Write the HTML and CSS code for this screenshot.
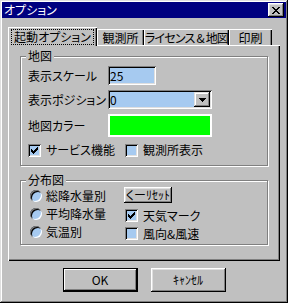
FILE: index.html
```html
<!DOCTYPE html>
<html lang="ja">
<head>
  <meta charset="UTF-8"/>
  <title>オプション</title>
  <link rel="stylesheet" href="styles.css">
</head>
<body>
  <div class="window">
    <div class="titlebar">
      <span class="title">オプション</span>
      <button class="close-btn">
        <svg width="8" height="7" viewBox="0 0 8 7" shape-rendering="crispEdges"><path d="M0 0h2v1H0zM6 0h2v1H6zM1 1h2v1H1zM5 1h2v1H5zM2 2h4v1H2zM3 3h2v1H3zM2 4h4v1H2zM1 5h2v1H1zM5 5h2v1H5zM0 6h2v1H0zM6 6h2v1H6z" fill="#000"/></svg>
      </button>
    </div>

    <div class="tabs">
      <div class="tab tab-start active"><span class="focus">起動オプション</span></div>
      <div class="tab tab-station">観測所</div>
      <div class="tab tab-license">ライセンス &amp; 地図</div>
      <div class="tab tab-print">印刷</div>
    </div>

    <div class="panel">
      <div class="group group-map">
        <span class="group-title">地図</span>
        <div class="field-row">
          <span class="field-label">表示スケール</span>
          <div class="textbox scale">25</div>
        </div>
        <div class="field-row">
          <span class="field-label">表示ポジション</span>
          <div class="textbox combo">
            <span>0</span>
            <span class="combo-btn">
              <svg width="7" height="4" viewBox="0 0 7 4" shape-rendering="crispEdges"><path d="M0 0h7v1H0zM1 1h5v1H1zM2 2h3v1H2zM3 3h1v1H3z" fill="#000"/></svg>
            </span>
          </div>
        </div>
        <div class="field-row">
          <span class="field-label">地図カラー</span>
          <div class="swatch"></div>
        </div>
        <div class="check-row">
          <div class="check check-wide">
            <span class="checkbox checked"><svg width="7" height="7" viewBox="0 0 7 7" shape-rendering="crispEdges"><path d="M6 0h1v1H6zM5 1h2v1H5zM0 2h1v1H0zM4 2h3v1H4zM0 3h2v1H0zM3 3h3v1H3zM0 4h5v1H0zM1 5h3v1H1zM2 6h1v1H2z" fill="#000"/></svg></span>
            <span>サービス機能</span>
          </div>
          <div class="check">
            <span class="checkbox"></span>
            <span>観測所表示</span>
          </div>
        </div>
      </div>

      <div class="group group-dist">
        <span class="group-title">分布図</span>
        <div class="dist-grid">
          <div class="radio-item"><span class="radio"></span><span>総降水量別</span></div>
          <div><button class="btn btn-small">くーﾘｾｯﾄ</button></div>
          <div class="radio-item"><span class="radio"></span><span>平均降水量</span></div>
          <div class="check check-col">
            <span class="checkbox checked"><svg width="7" height="7" viewBox="0 0 7 7" shape-rendering="crispEdges"><path d="M6 0h1v1H6zM5 1h2v1H5zM0 2h1v1H0zM4 2h3v1H4zM0 3h2v1H0zM3 3h3v1H3zM0 4h5v1H0zM1 5h3v1H1zM2 6h1v1H2z" fill="#000"/></svg></span>
            <span>天気マーク</span>
          </div>
          <div class="radio-item"><span class="radio"></span><span>気温別</span></div>
          <div class="check check-col">
            <span class="checkbox"></span>
            <span>風向&amp;風速</span>
          </div>
        </div>
      </div>
    </div>

    <div class="actions">
      <button class="btn btn-main default">OK</button>
      <button class="btn btn-main">ｷｬﾝｾﾙ</button>
    </div>
  </div>
</body>
</html>
```

FILE: styles.css
```css
* {
  margin: 0;
  padding: 0;
  box-sizing: border-box;
}
body {
  background: #c0c0c0;
  font-family: "Noto Sans CJK JP", "Noto Sans", sans-serif;
  font-size: 12px;
  line-height: 14px;
  color: #000;
  font-feature-settings: "palt";
}
button {
  font: inherit;
  color: #000;
  border: none;
  background: #c0c0c0;
}
.window {
  width: 288px;
  height: 303px;
  padding: 2px;
  box-shadow: inset -1px -1px #000, inset 1px 1px #dfdfdf, inset -2px -2px #808080, inset 2px 2px #fff;
}
.titlebar {
  height: 16px;
  background: #000080;
  color: #fff;
  display: flex;
  align-items: center;
  justify-content: space-between;
  padding: 0 2px;
}
.close-btn {
  width: 16px;
  height: 14px;
  display: flex;
  align-items: center;
  justify-content: center;
  box-shadow: inset -1px -1px #000, inset 1px 1px #fff, inset -2px -2px #808080, inset 2px 2px #dfdfdf;
}
.close-btn svg {
  display: block;
}

/* tabs */
.tabs {
  display: flex;
  align-items: flex-end;
  height: 18px;
  margin: 9px 0 0 6px;
}
.tab {
  height: 16px;
  line-height: 15px;
  padding-top: 1px;
  text-align: center;
  white-space: nowrap;
  background: #c0c0c0;
  box-shadow: inset 1px 1px #fff, inset -1px 0 #000, inset -2px 0 #808080;
}
.tab.active {
  height: 19px;
  margin-bottom: -1px;
  position: relative;
  z-index: 1;
  padding-top: 2px;
}
.focus {
  display: inline-block;
  outline: 1px dotted #000;
  padding: 0 2px;
  line-height: 14px;
}
.tab-start { width: 89px; }
.tab-station { width: 47px; }
.tab-license {
  width: 85px;
  letter-spacing: -0.8px;
}
.tab-print { width: 43px; }

/* panel */
.panel {
  width: 272px;
  height: 216px;
  margin-left: 6px;
  padding: 11px 12px 0 12px;
  box-shadow: inset 1px 1px #fff, inset -1px -1px #000, inset -2px -2px #808080;
}
.group {
  position: relative;
  border: 1px solid #808080;
  box-shadow: inset 1px 1px #fff, 1px 1px #fff;
  padding: 9px 6px 8px 7px;
}
.group-title {
  position: absolute;
  top: -8px;
  left: 5px;
  padding: 0 2px;
  line-height: 14px;
  background: #c0c0c0;
}
.group-dist {
  margin-top: 14px;
  padding-top: 6px;
  padding-bottom: 3px;
}

.field-row {
  display: flex;
  align-items: center;
  margin-bottom: 5px;
}
.field-label {
  width: 80px;
  white-space: nowrap;
}
.textbox {
  height: 19px;
  background: #a6caf0;
  padding: 2px 0 0 2px;
  line-height: 15px;
  box-shadow: inset 1px 1px #808080, inset -1px -1px #fff, inset 2px 2px #000, inset -2px -2px #dfdfdf;
}
.scale {
  width: 48px;
}
.combo {
  width: 104px;
  display: flex;
  justify-content: space-between;
  padding-right: 2px;
}
.combo-btn {
  width: 16px;
  height: 15px;
  display: flex;
  align-items: center;
  justify-content: center;
  background: #c0c0c0;
  box-shadow: inset -1px -1px #000, inset 1px 1px #dfdfdf, inset -2px -2px #808080, inset 2px 2px #fff;
}
.swatch {
  width: 104px;
  height: 23px;
  background: #00ff00;
  border: 2px solid #fff;
}

.check-row {
  display: flex;
  margin-top: 6px;
}
.check {
  display: flex;
  align-items: center;
  gap: 5px;
}
.check-wide {
  width: 97px;
}
.checkbox {
  width: 13px;
  height: 13px;
  display: flex;
  align-items: center;
  justify-content: center;
  background: #a6caf0;
  box-shadow: inset 1px 1px #808080, inset -1px -1px #fff, inset 2px 2px #000, inset -2px -2px #dfdfdf;
}
.checkbox svg {
  display: block;
}

.dist-grid {
  display: grid;
  grid-template-columns: 96px 1fr;
  grid-auto-rows: 18px;
  align-items: center;
}
.radio-item {
  display: flex;
  align-items: center;
  gap: 4px;
  padding-left: 2px;
}
.radio {
  width: 12px;
  height: 12px;
  border-radius: 50%;
  background: #a6caf0;
  box-shadow: inset 1px 1px #808080, inset -1px -1px #fff, inset 2px 2px #000;
}
.check-col {
  margin-left: 1px;
  margin-top: 3px;
}

.btn {
  box-shadow: inset -1px -1px #000, inset 1px 1px #fff, inset -2px -2px #808080, inset 2px 2px #dfdfdf;
}
.btn-small {
  display: block;
  width: 48px;
  height: 16px;
  line-height: 14px;
  margin-top: -2px;
}

.actions {
  display: flex;
  justify-content: center;
  gap: 13px;
  margin-top: 7px;
}
.btn-main {
  width: 75px;
  height: 24px;
}
.btn-main.default {
  box-shadow: inset 0 0 0 1px #000, inset -2px -2px #000, inset 2px 2px #fff, inset -3px -3px #808080;
}
```
